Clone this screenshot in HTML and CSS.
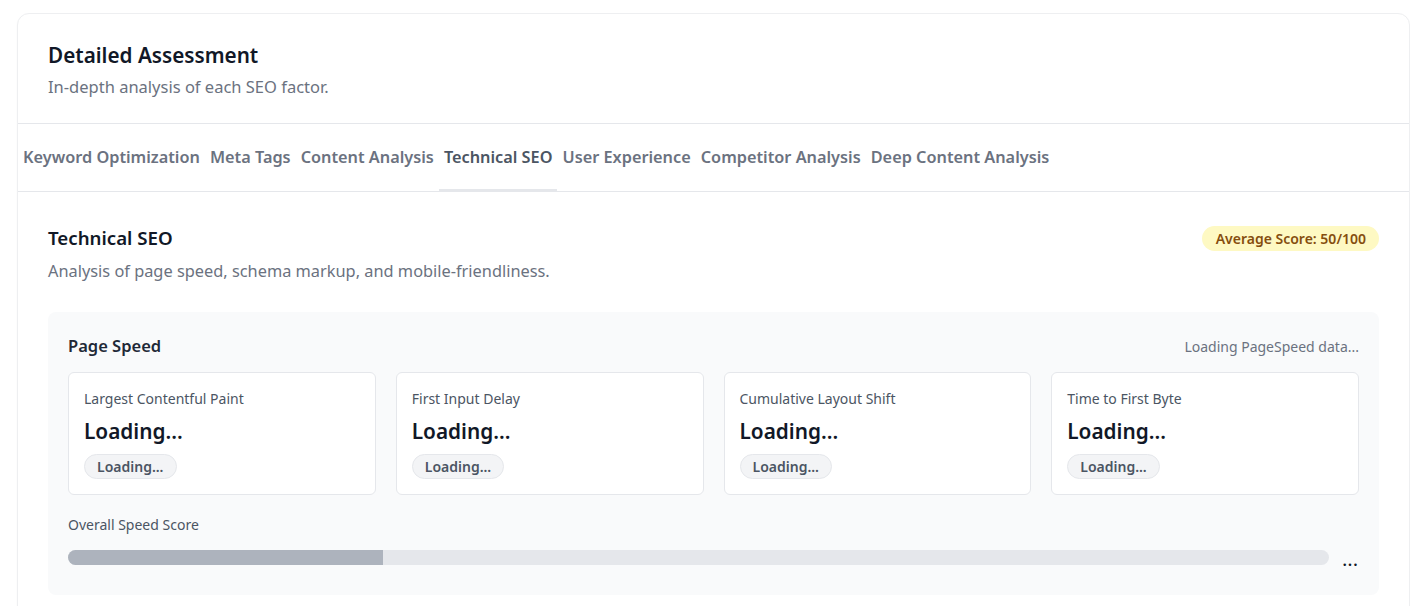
FILE: index.html
```html
<!DOCTYPE html>
<html lang="en">
<head>
<meta charset="utf-8">
<title>Detailed Assessment</title>
<link rel="stylesheet" href="styles.css">
</head>
<body>
<div class="card">
  <div class="card-header">
    <h2 class="title">Detailed Assessment</h2>
    <p class="subtitle">In-depth analysis of each SEO factor.</p>
  </div>
  <div class="tabs">
    <button class="tab">Keyword Optimization</button>
    <button class="tab">Meta Tags</button>
    <button class="tab">Content Analysis</button>
    <button class="tab active">Technical SEO</button>
    <button class="tab">User Experience</button>
    <button class="tab">Competitor Analysis</button>
    <button class="tab">Deep Content Analysis</button>
  </div>
  <div class="content">
    <div class="section-head">
      <h3 class="section-title">Technical SEO</h3>
      <span class="badge">Average Score: 50/100</span>
    </div>
    <p class="section-desc">Analysis of page speed, schema markup, and mobile-friendliness.</p>
    <div class="panel">
      <div class="panel-head">
        <h4 class="panel-title">Page Speed</h4>
        <span class="panel-note">Loading PageSpeed data...</span>
      </div>
      <div class="metrics">
        <div class="metric">
          <div class="metric-label">Largest Contentful Paint</div>
          <div class="metric-value">Loading...</div>
          <span class="pill">Loading...</span>
        </div>
        <div class="metric">
          <div class="metric-label">First Input Delay</div>
          <div class="metric-value">Loading...</div>
          <span class="pill">Loading...</span>
        </div>
        <div class="metric">
          <div class="metric-label">Cumulative Layout Shift</div>
          <div class="metric-value">Loading...</div>
          <span class="pill">Loading...</span>
        </div>
        <div class="metric">
          <div class="metric-label">Time to First Byte</div>
          <div class="metric-value">Loading...</div>
          <span class="pill">Loading...</span>
        </div>
      </div>
      <div class="overall-label">Overall Speed Score</div>
      <div class="overall-row">
        <div class="track"><div class="fill" style="width:25%"></div></div>
        <span class="overall-value">...</span>
      </div>
    </div>
  </div>
</div>
</body>
</html>
```

FILE: styles.css
```css
* { box-sizing: border-box; }
body {
  margin: 0;
  padding: 13px 0 0 17px;
  background: #ffffff;
  font-family: "Noto Sans", "Open Sans", sans-serif;
  color: #111827;
}
.card {
  background: #fff;
  border: 1px solid #eeeff1;
  border-radius: 12px;
  box-shadow: 0 1px 2px rgba(0,0,0,0.03);
}
.card-header {
  padding: 27px 30px 24px;
  border-bottom: 1px solid #e5e7eb;
}
.title {
  margin: 0;
  font-size: 20.7px;
  font-weight: 600;
  line-height: 28px;
  color: #111827;
}
.subtitle {
  margin: 6px 0 0;
  font-size: 16.5px;
  line-height: 24px;
  color: #6b7280;
}
.tabs {
  display: flex;
  padding: 0;
  border-bottom: 1px solid #e5e7eb;
  height: 68px;
  align-items: stretch;
}
.tab {
  border: 0;
  background: none;
  font-family: inherit;
  font-size: 16.3px;
  font-weight: 600;
  color: #6b7280;
  padding: 0 5px;
  margin-bottom: -1px;
  border-bottom: 3px solid transparent;
  cursor: pointer;
}
.tab.active {
  color: #4b5563;
  border-bottom-color: #e5e7eb;
}
.content {
  padding: 32px 30px 40px;
}
.section-head {
  display: flex;
  justify-content: space-between;
  align-items: center;
}
.section-title {
  margin: 0;
  font-size: 18.7px;
  font-weight: 600;
  line-height: 28px;
  color: #111827;
}
.badge {
  background: #fef9c3;
  color: #854d0e;
  font-size: 14px;
  font-weight: 600;
  line-height: 20px;
  padding: 3px 13px 2px 14px;
  border-radius: 9999px;
}
.section-desc {
  margin: 7px 0 0;
  font-size: 16.35px;
  line-height: 24px;
  color: #6b7280;
}
.panel {
  margin-top: 29px;
  background: #f9fafb;
  border-radius: 8px;
  padding: 22px 20px 24px;
}
.panel-head {
  display: flex;
  justify-content: space-between;
  align-items: center;
}
.panel-title {
  margin: 0;
  font-size: 16.5px;
  font-weight: 600;
  line-height: 24px;
  color: #1f2937;
}
.panel-note {
  font-size: 14px;
  color: #6b7280;
}
.metrics {
  margin-top: 14px;
  display: grid;
  grid-template-columns: repeat(4, 1fr);
  gap: 20px;
}
.metric {
  display: flex;
  flex-direction: column;
  align-items: flex-start;
  background: #fff;
  border: 1px solid #e5e7eb;
  border-radius: 6px;
  padding: 16px 15px 15px;
}
.metric-label {
  font-size: 14px;
  line-height: 20px;
  color: #4b5563;
}
.metric-value {
  margin-top: 8px;
  font-size: 20.8px;
  font-weight: 600;
  line-height: 28px;
  color: #111827;
}
.pill {
  display: block;
  margin-top: 9px;
  font-size: 14px;
  font-weight: 600;
  line-height: 21px;
  padding: 1px 12px;
  border: 1px solid #e5e7eb;
  background: #f3f4f6;
  color: #4b5563;
  border-radius: 9999px;
}
.overall-label {
  margin-top: 20px;
  font-size: 14px;
  line-height: 20px;
  color: #4b5563;
}
.overall-row {
  margin-top: 8px;
  display: flex;
  align-items: center;
  gap: 14px;
}
.track {
  flex: 1;
  height: 15px;
  background: #e5e7eb;
  border-radius: 9999px;
  overflow: hidden;
}
.fill {
  height: 100%;
  background: #adb3bd;
}
.overall-value {
  font-size: 14px;
  font-weight: 700;
  line-height: 20px;
  letter-spacing: 1.5px;
  color: #111827;
  padding-top: 8px;
}
```
